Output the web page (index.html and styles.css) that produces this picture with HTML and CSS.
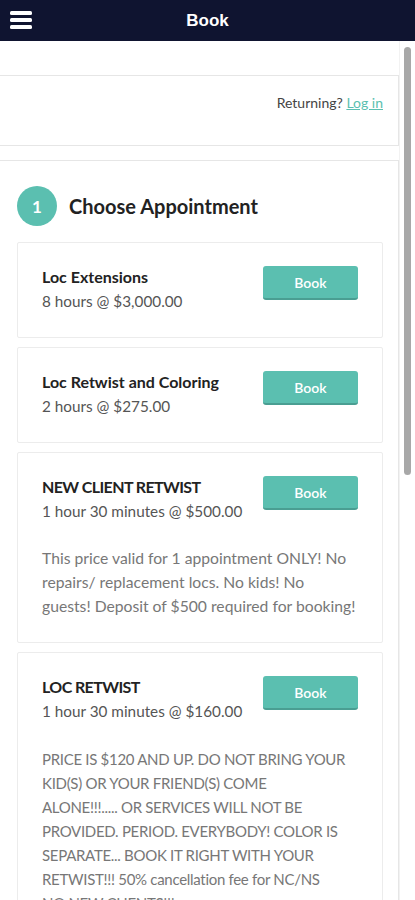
FILE: index.html
```html
<!DOCTYPE html>
<html lang="en">

<head>
    <meta charset="UTF-8" />
    <title>Book</title>
    <link rel="stylesheet" href="styles.css">
</head>

<body>
    <header class="topbar">
        <button class="menu-btn" aria-label="Menu">
            <svg width="22" height="18" viewBox="0 0 22 18">
                <rect x="0" y="0" width="22" height="4" rx="1.5" fill="#fff" />
                <rect x="0" y="7" width="22" height="4" rx="1.5" fill="#fff" />
                <rect x="0" y="14" width="22" height="4" rx="1.5" fill="#fff" />
            </svg>
        </button>
        <div class="topbar-title">Book</div>
    </header>

    <div class="viewport">
        <main class="content">
            <div class="panel login-panel">
                <span class="returning">Returning? <a href="#">Log in</a></span>
            </div>

            <div class="panel steps-panel">
                <div class="step-head">
                    <div class="step-num">1</div>
                    <h2>Choose Appointment</h2>
                </div>

                <div class="card">
                    <div class="card-top">
                        <div class="card-info">
                            <div class="card-title">Loc Extensions</div>
                            <div class="card-meta">8 hours @ $3,000.00</div>
                        </div>
                        <button class="book-btn">Book</button>
                    </div>
                </div>

                <div class="card">
                    <div class="card-top">
                        <div class="card-info">
                            <div class="card-title">Loc Retwist and Coloring</div>
                            <div class="card-meta">2 hours @ $275.00</div>
                        </div>
                        <button class="book-btn">Book</button>
                    </div>
                </div>

                <div class="card">
                    <div class="card-top">
                        <div class="card-info">
                            <div class="card-title caps">NEW CLIENT RETWIST</div>
                            <div class="card-meta">1 hour 30 minutes @ $500.00</div>
                        </div>
                        <button class="book-btn">Book</button>
                    </div>
                    <p class="card-desc">This price valid for 1 appointment ONLY! No<br>repairs/ replacement locs. No kids! No<br>guests! Deposit of $500 required for booking!</p>
                </div>

                <div class="card">
                    <div class="card-top">
                        <div class="card-info">
                            <div class="card-title caps">LOC RETWIST</div>
                            <div class="card-meta">1 hour 30 minutes @ $160.00</div>
                        </div>
                        <button class="book-btn">Book</button>
                    </div>
                    <p class="card-desc caps">PRICE IS $120 AND UP. DO NOT BRING YOUR<br>KID(S) OR YOUR FRIEND(S) COME<br>ALONE!!!..... OR SERVICES WILL NOT BE<br>PROVIDED. PERIOD. EVERYBODY! COLOR IS<br>SEPARATE... BOOK IT RIGHT WITH YOUR<br>RETWIST!!! 50% cancellation fee for NC/NS<br>NO NEW CLIENTS!!!</p>
                </div>
            </div>
        </main>

        <!-- fake scrollbar from the app screenshot -->
        <div class="scrollbar">
            <div class="scroll-thumb"></div>
        </div>
    </div>
</body>

</html>
```

FILE: styles.css
```css
html,
body {
    margin: 0;
    padding: 0;
    height: 900px;
    overflow: hidden;
}

body {
    background-color: #fff;
    font-family: "Lato", "Open Sans", sans-serif;
    color: #222;
}

.topbar {
    height: 41px;
    background-color: #0f1430;
    display: flex;
    align-items: center;
    justify-content: center;
    position: relative;
}

.menu-btn {
    position: absolute;
    left: 10px;
    top: 11px;
    background: none;
    border: none;
    padding: 0;
    line-height: 0;
}

.topbar-title {
    color: #fff;
    font-family: "Liberation Sans", Arial, sans-serif;
    font-weight: 700;
    font-size: 17px;
}

.viewport {
    display: flex;
    height: 859px;
}

.content {
    width: 399px;
    padding-top: 34px;
    overflow: hidden;
}

.scrollbar {
    flex: 1;
    display: flex;
    justify-content: center;
    padding-top: 6px;
    border-left: 1px solid #f2f2f2;
}

.scroll-thumb {
    width: 7px;
    height: 428px;
    background-color: #a8a8a8;
    border-radius: 4px;
}

.panel {
    border: 1px solid #e6e6e6;
    border-left: none;
    background: #fff;
}

.login-panel {
    height: 69px;
    display: flex;
    align-items: center;
    justify-content: flex-end;
    padding-right: 15px;
    margin-bottom: 14px;
}

.returning {
    font-size: 14px;
    color: #444;
    margin-top: -16px;
}

.returning a {
    color: #5bbfb0;
    text-decoration: underline;
}

.steps-panel {
    padding: 25px 15px 0 17px;
    border-bottom: none;
}

.step-head {
    display: flex;
    align-items: center;
    gap: 12px;
    margin-bottom: 16px;
}

.step-num {
    width: 40px;
    height: 40px;
    border-radius: 50%;
    background-color: #5bbfb0;
    color: #fff;
    font-weight: 700;
    font-size: 17px;
    display: flex;
    align-items: center;
    justify-content: center;
}

.step-head h2 {
    margin: 0;
    font-size: 20px;
    font-weight: 700;
    color: #222;
}

.card {
    border: 1px solid #ececec;
    border-radius: 2px;
    padding: 22px 24px 24px 24px;
    margin-bottom: 9px;
}

.card-top {
    display: flex;
    justify-content: space-between;
    align-items: flex-start;
}

.card-title {
    font-size: 16px;
    font-weight: 700;
    line-height: 24px;
    color: #222;
}

.card-meta {
    font-size: 15.3px;
    line-height: 24px;
    color: #555;
}

.book-btn {
    width: 95px;
    height: 34px;
    margin-top: 1px;
    background-color: #5bbfb0;
    border: none;
    border-bottom: 2px solid #4a9e92;
    border-radius: 3px;
    color: #fff;
    font-family: inherit;
    font-size: 14px;
    font-weight: 600;
}

.card-desc {
    margin: 23px 0 0 0;
    font-size: 15.7px;
    line-height: 24px;
    color: #777;
    white-space: nowrap;
}

/* upper-case text runs wide in Lato, tighten it */
.card-title.caps {
    letter-spacing: -0.6px;
}

.card-desc.caps {
    margin-top: 24px;
    font-size: 15px;
    letter-spacing: -0.3px;
}
```
